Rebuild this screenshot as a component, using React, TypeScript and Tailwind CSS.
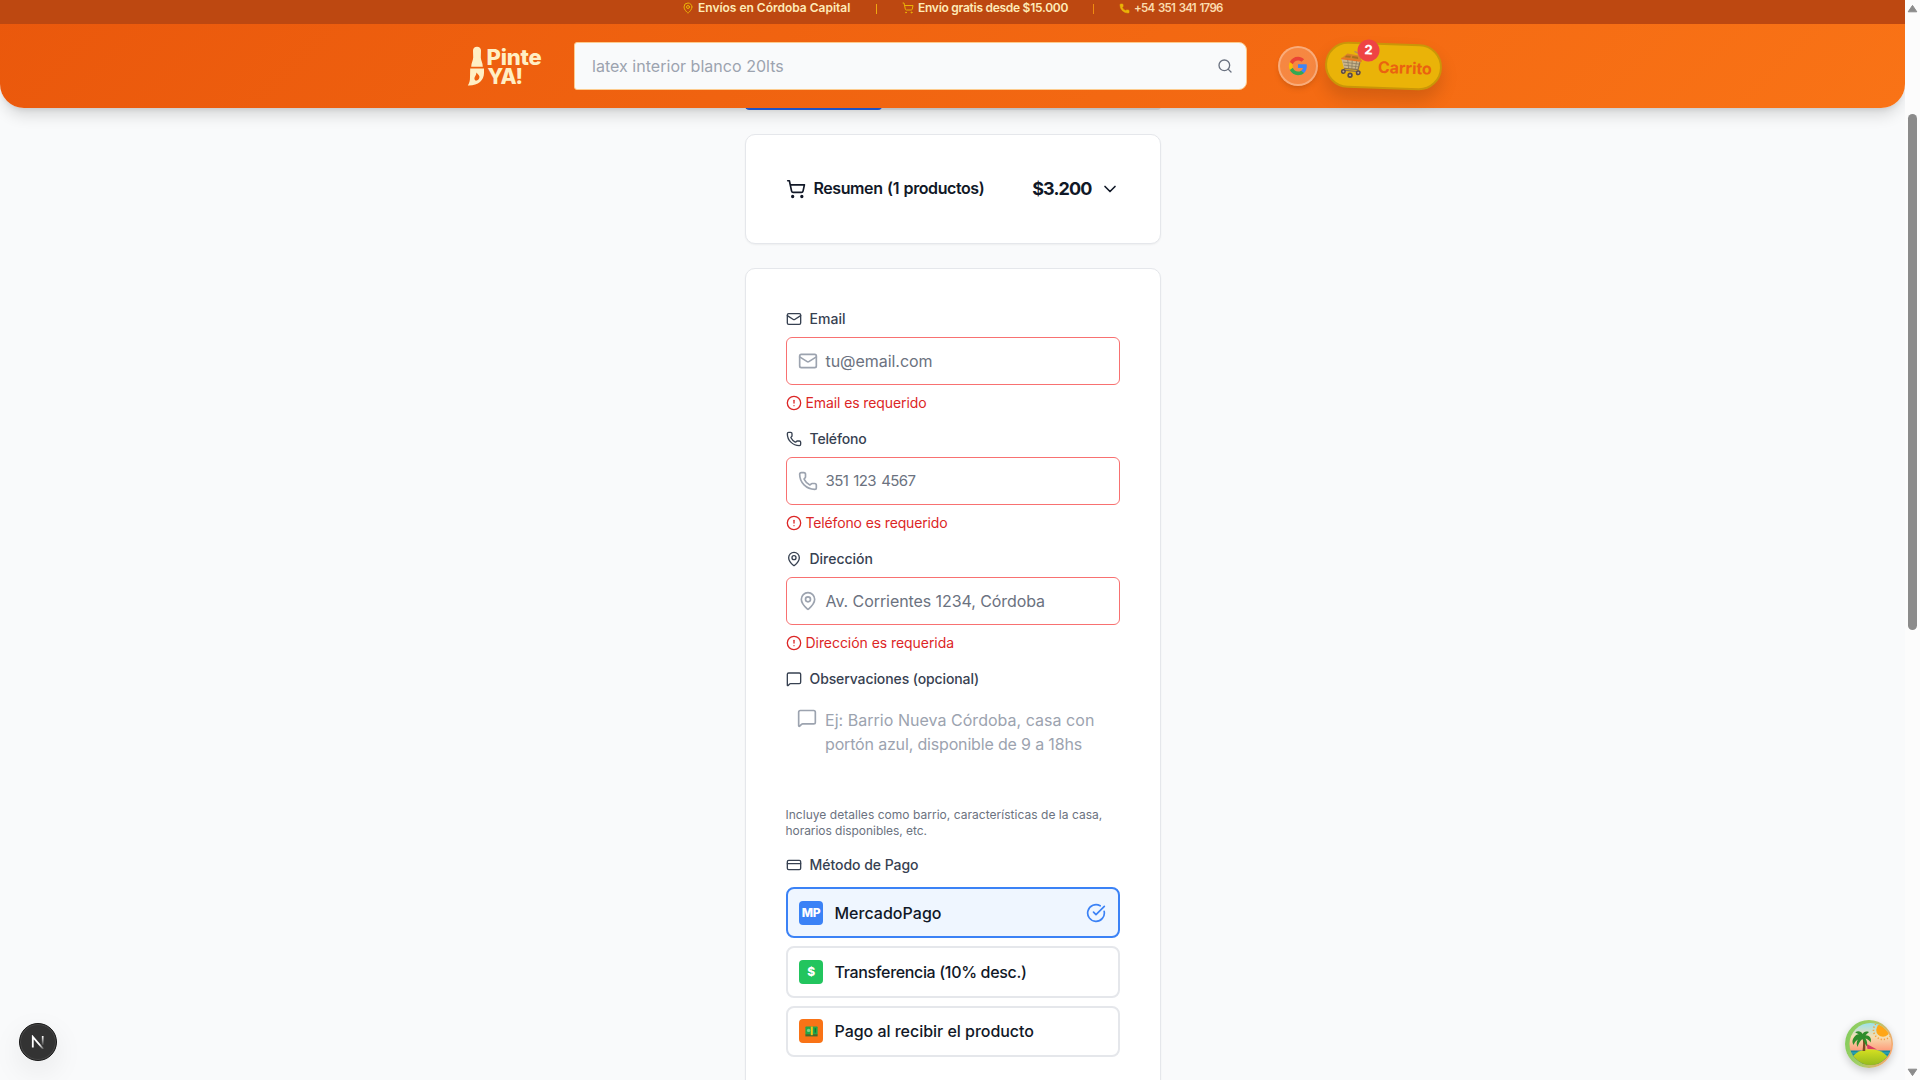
import React from 'react';
import {
  AlertCircle,
  ChevronDown,
  CircleCheckBig,
  CreditCard,
  Mail,
  MapPin,
  MessageSquare,
  Phone,
  Search,
  ShoppingCart,
  type LucideIcon,
} from 'lucide-react';

function Logo() {
  return (
    <div className="flex w-[76px] shrink-0 items-start text-[#ffefc4]">
      <svg width="18" height="42" viewBox="0 0 18 42" fill="currentColor" className="shrink-0">
        <path d="M6 5.5C6 3 7.6 1.7 10 1.7S14 3 14 5.5L13.8 12.5C13.8 15.5 15.8 17.5 15.8 21.8H4.2C4.2 17.5 6.2 15.5 6.2 12.5Z" />
        <path
          fillRule="evenodd"
          d="M3.2 23.4H17V28C17 35.5 11 40.8 0.8 40.4C2.6 38 3 35.5 3 32ZM9.4 27.5C9.6 30.2 7.4 31.2 7.4 33.6C7.4 35 8.4 35.8 9.6 35.6C11.6 35.2 12.6 33.6 12.4 31.6C12.2 29.8 10.4 29.2 9.4 27.5Z"
        />
      </svg>
      <div className="mt-[2.5px] pl-[1.5px] font-extrabold">
        <div className="h-[19px] text-[22px] leading-[19px] tracking-[-0.2px]">Pinte</div>
        <div className="h-[19px] pl-[1px] text-[21px] leading-[19px] tracking-[-1.1px]">YA!</div>
      </div>
    </div>
  );
}

function GoogleIcon() {
  return (
    <svg width="20" height="20" viewBox="0 0 24 24">
      <path fill="#4285F4" d="M22.56 12.25c0-.78-.07-1.53-.2-2.25H12v4.26h5.92c-.26 1.37-1.04 2.53-2.21 3.31v2.77h3.57c2.08-1.92 3.28-4.74 3.28-8.09z" />
      <path fill="#34A853" d="M12 23c2.97 0 5.46-.98 7.28-2.66l-3.57-2.77c-.98.66-2.23 1.06-3.71 1.06-2.86 0-5.29-1.93-6.16-4.53H2.18v2.84C3.99 20.53 7.7 23 12 23z" />
      <path fill="#FBBC05" d="M5.84 14.09c-.22-.66-.35-1.36-.35-2.09s.13-1.43.35-2.09V7.07H2.18C1.43 8.55 1 10.22 1 12s.43 3.45 1.18 4.93l3.66-2.84z" />
      <path fill="#EA4335" d="M12 5.38c1.62 0 3.06.56 4.21 1.64l3.15-3.15C17.45 2.09 14.97 1 12 1 7.7 1 3.99 3.47 2.18 7.07l3.66 2.84c.87-2.6 3.3-4.53 6.16-4.53z" />
    </svg>
  );
}

function CartPicture() {
  return (
    <svg width="24" height="30" viewBox="0 0 24 30" fill="none">
      <path d="M20.5 10.5L17.5 3L14 1.5" stroke="#b98a5a" strokeWidth="1.4" />
      <path d="M1 9L20.5 11L18.5 19L4 18.5Z" fill="#c9b48c" />
      <path d="M1 9L7 3.8L19.5 5.5L21.5 10.8Z" fill="#d9822b" />
      <path d="M6 5.8L10.5 6L10 8L4.5 7.5ZM12 6.2L17.5 6.7L18 8.8L11.8 8.2Z" fill="#a8701c" />
      <path d="M1 9L21.5 11" stroke="#e87424" strokeWidth="1.6" />
      <path d="M3 12.5L20 14M4 15.5L19 16.8M7.5 10L8.8 19M12 10.5V19M16.5 11L15.4 19" stroke="#85795f" strokeWidth="0.7" />
      <path d="M4 18.7L18.6 19.4M19.8 12L17.8 21.5L3.2 20.5" stroke="#8a7050" strokeWidth="1.2" />
      <circle cx="3.6" cy="21.8" r="2.5" fill="#5c4a48" />
      <circle cx="18.5" cy="22.6" r="2.5" fill="#5c4a48" />
      <circle cx="10.4" cy="25.4" r="2.7" fill="#5c4a48" />
      <circle cx="3.6" cy="21.8" r="1" fill="#c0a890" />
      <circle cx="18.5" cy="22.6" r="1" fill="#c0a890" />
      <circle cx="10.4" cy="25.4" r="1" fill="#c0a890" />
    </svg>
  );
}

function Header() {
  return (
    <header className="relative z-10 h-[108px] shrink-0 rounded-b-3xl bg-[linear-gradient(135deg,#ea580c,#f97316)] shadow-[0_10px_15px_-3px_rgba(0,0,0,0.14),0_4px_6px_-4px_rgba(0,0,0,0.14)]">
      <div className="flex h-6 items-start bg-[#bd4811] pl-[682px] text-[12px] leading-4 font-semibold text-[#feebb8]">
        <MapPin className="mt-[2px] mr-[4px] h-3 w-3 text-[#eab308]" />
        <span className="w-[178px] tracking-[-0.01px]">Envíos en Córdoba Capital</span>
        <span className="mt-[3.5px] h-[10px] w-px bg-[#f0a810]" />
        <ShoppingCart className="mt-[2px] mr-[4px] ml-[25px] h-3 w-3 text-[#eab308]" />
        <span className="w-[175px] tracking-[-0.27px]">Envío gratis desde $15.000</span>
        <span className="mt-[3.5px] h-[10px] w-px bg-[#f08c10]" />
        <Phone className="mt-[3px] mr-[4px] ml-[25px] h-[11px] w-[11px] fill-[#eab308] text-[#eab308]" strokeWidth={1} />
        <span className="text-[11.5px] tracking-[-0.7px] text-[#fbdcae] [word-spacing:1.2px]">+54 351 341 1796</span>
      </div>
      <div className="flex h-[84px] items-center pl-[467px]">
        <Logo />
        <div className="ml-[31px] flex h-12 w-[673px] items-center justify-between rounded-l-[3px] rounded-r-lg border border-[#fdcb8d] bg-[#f9fafb] pr-[13px] pl-[17px]">
          <span className="text-base tracking-[0.03px] text-[#9ca3af]">latex interior blanco 20lts</span>
          <Search className="h-4 w-4 text-[#6b7280]" />
        </div>
        <button className="ml-[31px] flex h-10 w-10 items-center justify-center rounded-full border-2 border-white/30 bg-white/20 shadow-md">
          <GoogleIcon />
        </button>
        <button className="relative ml-[7px] flex h-[46px] w-[117px] rotate-[2deg] items-center rounded-full border-2 border-[#ca9608] bg-[#eab308] pl-[13px] shadow-[0_10px_18px_rgba(0,0,0,0.14)]">
          <CartPicture />
          <span className="mt-[2px] ml-[14px] text-[16px] font-bold tracking-[-0.05px] text-[#ea6210]">Carrito</span>
          <span className="absolute top-[-5px] left-[30px] flex h-[22px] w-[22px] items-center justify-center rounded-full bg-[#ef4444] text-[13px] font-extrabold text-white">2</span>
        </button>
      </div>
    </header>
  );
}

function Label({ icon: Icon, text, tracking }: { icon: LucideIcon; text: string; tracking: string }) {
  return (
    <div className="flex h-5 items-center gap-2 text-sm font-medium text-[#374151]">
      <Icon className="h-4 w-4" />
      <span className={tracking}>{text}</span>
    </div>
  );
}

interface FieldProps {
  icon: LucideIcon;
  label: string;
  labelTracking: string;
  placeholder: string;
  placeholderStyle: string;
  error: string;
  errorTracking: string;
}

function Field({ icon: Icon, label, labelTracking, placeholder, placeholderStyle, error, errorTracking }: FieldProps) {
  return (
    <div className="flex flex-col gap-2">
      <Label icon={Icon} text={label} tracking={labelTracking} />
      <div className="flex h-12 items-center gap-2 rounded-md border border-[#f87171] pb-px pl-[11px]">
        <Icon className="h-5 w-5 text-[#9ca3af]" />
        <span className={'text-[#6b7280] ' + placeholderStyle}>{placeholder}</span>
      </div>
      <div className="flex h-5 items-center gap-1 text-sm text-[#dc2626]">
        <AlertCircle className="h-4 w-4" />
        <span className={errorTracking}>{error}</span>
      </div>
    </div>
  );
}

function Banknote() {
  return (
    <svg width="13" height="11" viewBox="0 0 13 11">
      <rect x="0.4" y="0.6" width="12.2" height="8" rx="0.6" fill="#1fa84a" />
      <rect x="0.4" y="8.2" width="12.2" height="2.2" fill="#3f6b2f" />
      <circle cx="3.6" cy="4.4" r="1.7" fill="#7ad08a" />
      <rect x="5.8" y="0.6" width="2" height="8.6" fill="#f5c518" />
      <rect x="9.6" y="2.2" width="1.4" height="4.4" fill="#12753a" />
    </svg>
  );
}

function Payment({ badge, color, text, tracking, selected }: { badge: React.ReactNode; color: string; text: string; tracking: string; selected?: boolean }) {
  return (
    <div
      className={
        'flex h-[51.4px] items-center rounded-lg px-[11.5px] ' +
        (selected ? 'border-2 border-[#3b82f6] bg-[#eff6ff]' : 'border-2 border-[#e5e7eb] bg-white')
      }
    >
      <span className={'flex h-6 w-6 items-center justify-center rounded text-xs font-extrabold tracking-[-0.4px] text-white ' + color}>{badge}</span>
      <span className={'ml-[11.5px] flex-1 text-base font-medium text-[#111827] ' + tracking}>{text}</span>
      {selected && <CircleCheckBig className="h-5 w-5 text-[#3b82f6]" />}
    </div>
  );
}

function NextBadge() {
  return (
    <div className="absolute bottom-[19px] left-[19px] flex h-[38px] w-[38px] items-center justify-center rounded-full border border-[#171717] bg-[#333] shadow-[0_10px_30px_rgba(0,0,0,0.08),inset_0_0_0_1px_#484848]">
      <svg width="14" height="14" viewBox="0 0 14 14" fill="none">
        <defs>
          <linearGradient id="stem" x1="0" y1="1" x2="0" y2="10" gradientUnits="userSpaceOnUse">
            <stop stopColor="#fff" />
            <stop offset="1" stopColor="#fff" stopOpacity="0.1" />
          </linearGradient>
          <linearGradient id="slash" x1="2" y1="2" x2="13" y2="14" gradientUnits="userSpaceOnUse">
            <stop offset="0.6" stopColor="#fff" />
            <stop offset="1" stopColor="#fff" stopOpacity="0.1" />
          </linearGradient>
        </defs>
        <path d="M1.8 12.5V1.8L12.3 14" stroke="url(#slash)" strokeWidth="1.8" />
        <path d="M11.7 1V10" stroke="url(#stem)" strokeWidth="1.7" />
      </svg>
    </div>
  );
}

function PalmBadge() {
  return (
    <div className="absolute right-[12px] bottom-[12px] h-12 w-12 rounded-full shadow-[0_3px_8px_rgba(0,0,0,0.2)]">
      <svg width="48" height="48" viewBox="0 0 48 48">
        <defs>
          <linearGradient id="sky" x1="0" y1="0" x2="0" y2="1">
            <stop offset="0.05" stopColor="#98e2ef" />
            <stop offset="0.35" stopColor="#f6deb0" />
            <stop offset="0.7" stopColor="#ff8f70" />
          </linearGradient>
          <linearGradient id="rim" x1="0" y1="0.3" x2="1" y2="0.6">
            <stop stopColor="#84cc5c" />
            <stop offset="0.45" stopColor="#a4cf68" />
            <stop offset="1" stopColor="#f9a66c" />
          </linearGradient>
          <linearGradient id="sand" x1="0" y1="0" x2="0" y2="1">
            <stop stopColor="#d6e021" />
            <stop offset="1" stopColor="#6fa51a" />
          </linearGradient>
          <clipPath id="disc">
            <circle cx="25.5" cy="24" r="21" />
          </clipPath>
        </defs>
        <circle cx="24" cy="24" r="24" fill="url(#rim)" />
        <g clipPath="url(#disc)">
          <rect width="48" height="48" fill="url(#sky)" />
          <circle cx="38" cy="10" r="9.5" fill="none" stroke="#f5a03c" strokeWidth="1.6" strokeDasharray="1.2 2" />
          <circle cx="38" cy="10" r="6.8" fill="#ffa617" />
          <rect y="30.5" width="48" height="14" fill="#148b9e" />
          <path d="M0 33H48M0 36H48" stroke="#47b9c2" strokeWidth="0.8" />
          <path d="M22.5 29L21.8 24L32 29.5Z" fill="#d93b63" />
          <ellipse cx="25" cy="42" rx="19" ry="12.8" fill="url(#sand)" />
          <path d="M17.2 17C18.6 21 18.2 26 17.5 31H20.2C20.8 26 20 20 18.4 16Z" fill="#7b4a22" />
          <path
            d="M17.5 16C14 13 10.5 14 8 19C7 21.5 7.5 23 8.5 25C10 21.5 11.5 20.5 13 19.5C11.5 21.5 11.2 24 12.5 27C13.8 23 15.5 20.5 17.5 19C19 21 20 24 21.6 26.5C22.8 23.5 22 20.5 20.4 18.5C22.5 19 24.5 20.5 25.6 22.4C27 18.5 24.5 15.2 20.5 15.3L24 12C20.5 10.8 18.5 12 17.7 14C16 11 12.5 10.6 10.2 12.5Z"
            fill="#2f8d2b"
          />
        </g>
      </svg>
    </div>
  );
}

function Scrollbar() {
  return (
    <div className="flex w-[15px] shrink-0 flex-col items-center bg-[#fcfcfc]">
      <svg className="mt-[4px] shrink-0" width="11" height="9" viewBox="0 0 11 9">
        <path d="M5.5 1.4L9.8 7.8H1.2Z" fill="#8b8b8b" stroke="#8b8b8b" strokeLinejoin="round" />
      </svg>
      <div className="mt-[101px] h-[516px] w-[9px] shrink-0 rounded-full bg-[#8b8b8b]" />
      <svg className="mt-auto mb-[3px] shrink-0" width="11" height="9" viewBox="0 0 11 9">
        <path d="M5.5 7.6L9.8 1.2H1.2Z" fill="#8b8b8b" stroke="#8b8b8b" strokeLinejoin="round" />
      </svg>
    </div>
  );
}

export default function App() {
  return (
    <div className="flex h-[1080px] w-[1920px] overflow-hidden font-['Inter',sans-serif]">
      <div className="relative flex h-full w-[1905px] flex-col overflow-hidden bg-[#f9fafb]">
        <Header />
        <main className="-mt-[6px] ml-[744.5px] flex w-[416px] flex-col gap-6">
          <div className="h-2 shrink-0 overflow-hidden rounded-full bg-[#e5e7eb]">
            <div className="h-full w-[137px] rounded-full bg-[#2563eb]" />
          </div>
          <section className="flex h-[109.5px] shrink-0 items-center rounded-[10px] border border-[#e5e7eb] bg-white px-10 text-[#111827] shadow-[0_1px_2px_rgba(0,0,0,0.05)]">
            <ShoppingCart className="h-5 w-5" />
            <span className="mb-px ml-2 flex-1 text-base font-semibold tracking-[-0.42px] [word-spacing:1px]">Resumen (1 productos)</span>
            <span className="mt-px mr-2 text-lg font-bold tracking-[-0.9px]">$3.200</span>
            <ChevronDown className="h-5 w-5" />
          </section>
          <section className="mt-[0.5px] flex h-[900px] shrink-0 flex-col gap-4 rounded-[10px] border border-[#e5e7eb] bg-white p-10 shadow-[0_1px_2px_rgba(0,0,0,0.05)]">
            <Field
              icon={Mail}
              label="Email"
              labelTracking="tracking-[0.02px]"
              placeholder="tu@email.com"
              placeholderStyle="text-base tracking-[-0.05px]"
              error="Email es requerido"
              errorTracking="tracking-[-0.1px]"
            />
            <Field
              icon={Phone}
              label="Teléfono"
              labelTracking="tracking-[-0.16px]"
              placeholder="351 123 4567"
              placeholderStyle="text-[15px] leading-6 tracking-[-0.6px] [word-spacing:1.5px]"
              error="Teléfono es requerido"
              errorTracking="tracking-[-0.14px]"
            />
            <Field
              icon={MapPin}
              label="Dirección"
              labelTracking="tracking-[-0.01px]"
              placeholder="Av. Corrientes 1234, Córdoba"
              placeholderStyle="text-base tracking-[-0.075px]"
              error="Dirección es requerida"
              errorTracking="tracking-[-0.055px]"
            />
            <div className="flex flex-col">
              <Label icon={MessageSquare} text="Observaciones (opcional)" tracking="tracking-[-0.105px]" />
              <div className="mt-2 flex h-[110px] gap-2 pt-[11px] pl-[11.5px] text-base leading-6 text-[#9ca3af]">
                <MessageSquare className="h-5 w-5" />
                <div className="whitespace-nowrap">
                  <div className="tracking-[0.03px]">Ej: Barrio Nueva Córdoba, casa con</div>
                  <div className="tracking-[-0.165px]">portón azul, disponible de 9 a 18hs</div>
                </div>
              </div>
              <div className="text-xs whitespace-nowrap text-[#6b7280]">
                <div className="tracking-[0.03px]">Incluye detalles como barrio, características de la casa,</div>
                <div className="tracking-[-0.05px]">horarios disponibles, etc.</div>
              </div>
            </div>
            <div className="flex flex-col gap-2">
              <div className="mb-1">
                <Label icon={CreditCard} text="Método de Pago" tracking="tracking-[-0.04px]" />
              </div>
              <Payment badge="MP" color="bg-[#3b82f6]" text="MercadoPago" tracking="tracking-[0.02px]" selected />
              <Payment badge="$" color="bg-[#22c55e]" text="Transferencia (10% desc.)" tracking="tracking-[-0.34px]" />
              <Payment badge={<Banknote />} color="bg-[#f97316]" text="Pago al recibir el producto" tracking="tracking-[-0.03px]" />
            </div>
          </section>
        </main>
        <NextBadge />
        <PalmBadge />
      </div>
      <Scrollbar />
    </div>
  );
}
